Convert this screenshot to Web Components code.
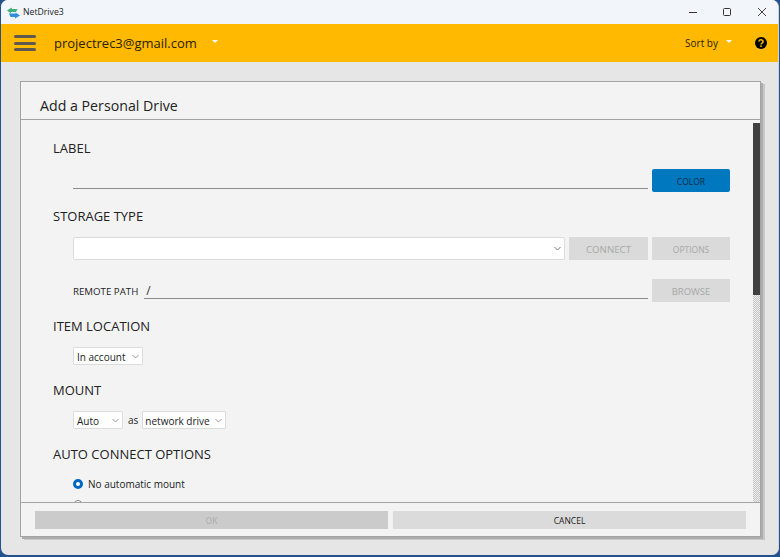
<!DOCTYPE html>
<html>
<head>
<meta charset="utf-8">
<title>NetDrive3</title>
<style>
  html, body { margin: 0; height: 100%; background: #24528f; overflow: hidden; }
  body { font-family: "Open Sans", "Noto Sans", sans-serif; color: #1c1c1c; }
  .row { display: flex; gap: 4px; }
</style>
</head>
<body>
<nd-window>
  <nd-titlebar></nd-titlebar>
  <nd-toolbar account="projectrec3@gmail.com"></nd-toolbar>
  <nd-dialog heading="Add a Personal Drive">
    <nd-section heading="LABEL">
      <div class="row" style="margin-top:12px">
        <nd-line style="flex:1"></nd-line>
        <nd-button kind="primary" style="width:78px">COLOR</nd-button>
      </div>
    </nd-section>
    <nd-section heading="STORAGE TYPE" style="margin-top:16px">
      <div class="row" style="margin-top:12px">
        <nd-combo style="flex:1"></nd-combo>
        <nd-button style="width:79px;font-size:9.7px">CONNECT</nd-button>
        <nd-button style="width:78px">OPTIONS</nd-button>
      </div>
      <div class="row" style="margin-top:19px">
        <span style="font-size:9.7px;line-height:14px;margin:6px 2px 0 0">REMOTE PATH</span>
        <nd-line style="flex:1" value="/"></nd-line>
        <nd-button style="width:78px;font-size:9.5px">BROWSE</nd-button>
      </div>
    </nd-section>
    <nd-section heading="ITEM LOCATION" style="margin-top:16px">
      <div style="margin-top:12px;display:flex"><nd-select style="width:70px">In account</nd-select></div>
    </nd-section>
    <nd-section heading="MOUNT" style="margin-top:17px">
      <div style="margin-top:12px;display:flex;align-items:center">
        <nd-select style="width:50px">Auto</nd-select>
        <span style="font-size:10px;margin:0 4px 0 5px">as</span>
        <nd-select style="width:84px;padding-left:2px">network drive</nd-select>
      </div>
    </nd-section>
    <nd-section heading="AUTO CONNECT OPTIONS" style="margin-top:17px">
      <div style="margin-top:14px;display:flex;flex-direction:column;gap:7px">
        <nd-radio checked>No automatic mount</nd-radio>
        <nd-radio></nd-radio>
      </div>
    </nd-section>
  </nd-dialog>
</nd-window>

<script>
class NdWindow extends HTMLElement {
  constructor() {
    super();
    this.attachShadow({ mode: 'open' });
    this.shadowRoot.innerHTML = `
      <style>
        :host { display: flex; flex-direction: column; width: 777px; height: 555px; margin-left: 1px;
                background: #e6e6e6; border-right: 1px solid #d2d2d2; border-radius: 7px; overflow: hidden; }
      </style>
      <slot></slot>`;
  }
}

class NdTitlebar extends HTMLElement {
  constructor() {
    super();
    this.attachShadow({ mode: 'open' });
    this.shadowRoot.innerHTML = `
      <style>
        :host { display: flex; align-items: center; height: 24px; flex: none; background: #f2f6fb;
                font-size: 8.7px; color: #222; }
        .logo { margin: 0 3px 0 6px; display: block; }
        .name { flex: 1; }
        .ctl { display: flex; gap: 26px; margin-right: 12px; }
        .ctl svg { display: block; width: 8px; height: 8px; }
        .ctl svg:last-child { margin-left: 1px; }
      </style>
      <svg class="logo" width="13" height="13" viewBox="0 0 13 13">
        <path d="M0 4.5 4.5 1.5 5 3 10.5 3 9 6 4 6 4 7.5Z" fill="#3fb07c"/>
        <path d="M2 7.5 8.5 7.5 8.5 6.5 13 9.5 8 12.5 8 11 3.5 11Z" fill="#2f8fdc"/>
      </svg>
      <span class="name">NetDrive3</span>
      <div class="ctl">
        <svg viewBox="0 0 8 8"><path d="M0 4.5h8" stroke="#333" fill="none"/></svg>
        <svg viewBox="0 0 8 8"><rect x=".5" y=".5" width="7" height="7" rx="1" stroke="#333" fill="none"/></svg>
        <svg viewBox="0 0 8 8"><path d="M0 0l8 8M8 0l-8 8" stroke="#444" fill="none"/></svg>
      </div>`;
  }
}

class NdToolbar extends HTMLElement {
  constructor() {
    super();
    this.attachShadow({ mode: 'open' });
    const account = this.getAttribute('account') || '';
    this.shadowRoot.innerHTML = `
      <style>
        :host { display: flex; align-items: center; height: 38px; flex: none; background: #ffb900;
                color: #2b2100; }
        .menu { width: 22px; height: 16px; margin-left: 13px; display: flex; flex-direction: column;
                justify-content: space-between; }
        .menu i { display: block; height: 3px; border-radius: 1.5px; background: #5e5a50; }
        .acct { font-size: 13px; margin-left: 18px; }
        .caret { width: 0; height: 0; border: 3px solid transparent; border-top: 3px solid #fff; border-bottom: 0; }
        .c1 { margin-left: 15px; margin-top: -3px; }
        .spacer { flex: 1; }
        .sort { font-size: 10px; }
        .c2 { margin-left: 8px; margin-top: -3px; }
        .help { margin: 0 11px 0 23px; display: block; }
      </style>
      <div class="menu"><i></i><i></i><i></i></div>
      <span class="acct">${account}</span>
      <span class="caret c1"></span>
      <span class="spacer"></span>
      <span class="sort">Sort by</span>
      <span class="caret c2"></span>
      <svg class="help" width="12" height="12" viewBox="0 0 12 12">
        <circle cx="6" cy="6" r="6" fill="#000"/>
        <path d="M4 4.6a2 1.8 0 1 1 3 1.5c-.7.4-1 .7-1 1.4" fill="none" stroke="#ffb900" stroke-width="1.5"/>
        <rect x="5.2" y="8.4" width="1.6" height="1.6" fill="#ffb900"/>
      </svg>`;
  }
}

class NdDialog extends HTMLElement {
  constructor() {
    super();
    this.attachShadow({ mode: 'open' });
    const heading = this.getAttribute('heading') || '';
    this.shadowRoot.innerHTML = `
      <style>
        :host { display: flex; flex-direction: column; width: 739px; height: 454px; margin: 19px 0 0 19px;
                flex: none; background: #f3f3f3; border: 1px solid #a3a3a3;
                box-shadow: 2px 2px 0 #adadad, 4px 3px 0 #c8c8c8; }
        header { height: 37px; flex: none; border-bottom: 1px solid #a3a3a3;
                 font-size: 14.2px; line-height: 48px; padding-left: 19px; color: #222; overflow: hidden; }
        .mid { flex: 1; display: flex; min-height: 0; }
        .body { flex: 1; overflow: hidden; padding: 20px 0 0 32px; }
        .track { width: 7px; flex: none; margin-top: 3px; display: flex; flex-direction: column;
                 background: repeating-conic-gradient(#c4c4c4 0 25%, #eeeeee 0 50%) 0 0 / 2px 2px; }
        .thumb { height: 172px; background: #404040; }
        footer { height: 34px; flex: none; border-top: 1px solid #a3a3a3; display: flex; gap: 5px;
                 padding: 8px 0 0 14px; box-sizing: border-box; }
        nd-button { width: 353px; height: 18px; }
      </style>
      <header>${heading}</header>
      <div class="mid">
        <div class="body"><slot></slot></div>
        <div class="track"><div class="thumb"></div></div>
      </div>
      <footer>
        <nd-button tone="dark">OK</nd-button>
        <nd-button tone="cancel">CANCEL</nd-button>
      </footer>`;
  }
}

class NdSection extends HTMLElement {
  constructor() {
    super();
    this.attachShadow({ mode: 'open' });
    const heading = this.getAttribute('heading') || '';
    this.shadowRoot.innerHTML = `
      <style>
        :host { display: block; width: 677px; }
        h3 { margin: 0; font-weight: 400; font-size: 13px; line-height: 17px; color: #222; }
        .in { padding-left: 20px; }
      </style>
      <h3>${heading}</h3>
      <div class="in"><slot></slot></div>`;
  }
}

class NdButton extends HTMLElement {
  constructor() {
    super();
    this.attachShadow({ mode: 'open' });
    this.shadowRoot.innerHTML = `
      <style>
        :host { display: flex; align-items: center; justify-content: center; height: 23px; flex: none;
                box-sizing: border-box; padding-top: 1px; background: #dadada; color: #a8a8a8; font-size: 8.5px; }
        :host([kind=primary]) { background: #0078c0; color: #0b2a44; border-radius: 2px; }
        :host([tone=dark]) { background: #cbcbcb; color: #aaa; padding-top: 0; }
        :host([tone=cancel]) { background: #dbdbdb; color: #222; padding-top: 0; }
      </style>
      <slot></slot>`;
  }
}

class NdLine extends HTMLElement {
  constructor() {
    super();
    this.attachShadow({ mode: 'open' });
    const value = this.getAttribute('value') || '';
    this.shadowRoot.innerHTML = `
      <style>
        :host { display: block; height: 15px; border-bottom: 1px solid #8c8c8c; margin-top: 4px;
                font-size: 12px; line-height: 15px; padding-left: 2px; color: #333; }
      </style>
      ${value}`;
  }
}

class NdCombo extends HTMLElement {
  constructor() {
    super();
    this.attachShadow({ mode: 'open' });
    this.shadowRoot.innerHTML = `
      <style>
        :host { display: flex; align-items: center; justify-content: flex-end; height: 23px; box-sizing: border-box;
                background: #fff; border: 1px solid #dcdcdc; border-radius: 2px; padding-right: 3px; }
        svg { display: block; }
      </style>
      <svg width="7" height="5" viewBox="0 0 7 5"><path d="M.5 1 3.5 4 6.5 1" fill="none" stroke="#777"/></svg>`;
  }
}

class NdSelect extends HTMLElement {
  constructor() {
    super();
    this.attachShadow({ mode: 'open' });
    this.shadowRoot.innerHTML = `
      <style>
        :host { display: flex; align-items: center; height: 18px; box-sizing: border-box; flex: none;
                background: #fff; border: 1px solid #dcdcdc; border-radius: 1px; font-size: 10px; padding: 0 3px;
                color: #222; white-space: nowrap; }
        .t { flex: 1; padding-top: 1px; }
        svg { display: block; }
      </style>
      <span class="t"><slot></slot></span>
      <svg width="7" height="5" viewBox="0 0 7 5"><path d="M.5 1 3.5 4 6.5 1" fill="none" stroke="#999"/></svg>`;
  }
}

class NdRadio extends HTMLElement {
  constructor() {
    super();
    this.attachShadow({ mode: 'open' });
    this.shadowRoot.innerHTML = `
      <style>
        :host { display: flex; align-items: center; gap: 5px; height: 14px; font-size: 10px; color: #222; }
        .dot { width: 10px; height: 10px; border-radius: 50%; box-sizing: border-box; border: 1px solid #888; background: #fff; flex: none; }
        :host([checked]) .dot { border: 3px solid #0067c0; }
      </style>
      <span class="dot"></span>
      <span><slot></slot></span>`;
  }
}

customElements.define('nd-window', NdWindow);
customElements.define('nd-titlebar', NdTitlebar);
customElements.define('nd-toolbar', NdToolbar);
customElements.define('nd-dialog', NdDialog);
customElements.define('nd-section', NdSection);
customElements.define('nd-button', NdButton);
customElements.define('nd-line', NdLine);
customElements.define('nd-combo', NdCombo);
customElements.define('nd-select', NdSelect);
customElements.define('nd-radio', NdRadio);
</script>
</body>
</html>
